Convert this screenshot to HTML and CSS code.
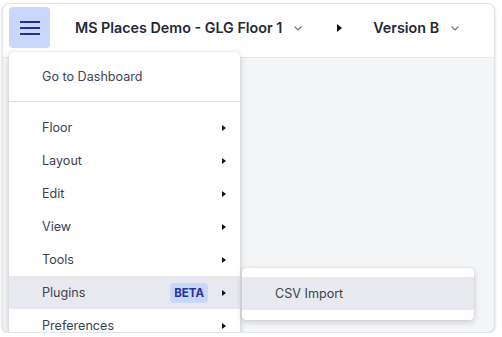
FILE: index.html
```html
<!DOCTYPE html>
<html>
<head>
<meta charset="utf-8">
<link rel="stylesheet" href="styles.css">
</head>
<body>
<div class="card">
  <header class="header">
    <button class="burger" aria-label="Menu">
      <svg width="20" height="14" viewBox="0 0 20 14"><path d="M0 1h20M0 7h20M0 13h20" stroke="#25318f" stroke-width="2"/></svg>
    </button>
    <div class="crumb title">MS Places Demo - GLG Floor 1
      <svg class="chev" width="8" height="5" viewBox="0 0 8 5"><path d="M0.5 0.5L4 4L7.5 0.5" fill="none" stroke="#6b7280" stroke-width="1.1"/></svg>
    </div>
    <svg class="sep" width="5" height="8" viewBox="0 0 5 8"><path d="M0 0L5 4L0 8Z" fill="#111"/></svg>
    <div class="crumb version">Version B
      <svg class="chev" width="8" height="5" viewBox="0 0 8 5"><path d="M0.5 0.5L4 4L7.5 0.5" fill="none" stroke="#6b7280" stroke-width="1.1"/></svg>
    </div>
  </header>
  <main class="canvas"></main>

  <nav class="menu">
    <div class="group">
      <div class="item">Go to Dashboard</div>
    </div>
    <div class="group">
      <div class="item">Floor<span class="arrow"></span></div>
      <div class="item">Layout<span class="arrow"></span></div>
      <div class="item">Edit<span class="arrow"></span></div>
      <div class="item">View<span class="arrow"></span></div>
      <div class="item">Tools<span class="arrow"></span></div>
      <div class="item active">Plugins<span class="badge">BETA</span><span class="arrow"></span></div>
      <div class="item">Preferences<span class="arrow"></span></div>
    </div>
  </nav>

  <nav class="submenu">
    <div class="item active">CSV Import</div>
  </nav>
</div>
</body>
</html>
```

FILE: styles.css
```css
* { box-sizing: border-box; }
html, body { margin: 0; padding: 0; background: #fff; }
body {
  font-family: Inter, "Noto Sans", sans-serif;
  color: #374151;
}
.card {
  position: relative;
  margin: 3px 0 0 2px;
  width: 493px;
  height: 330px;
  border: 1px solid #e2e4e8;
  border-radius: 8px;
  box-shadow: 0 1px 3px rgba(0,0,0,0.18);
  overflow: hidden;
  display: flex;
  flex-direction: column;
  background: #f4f5f7;
}
.header {
  height: 54px;
  flex: none;
  background: #fff;
  border-bottom: 1px solid #e5e7eb;
  display: flex;
  align-items: flex-start;
  padding: 3px 0 0 6px;
}
.burger {
  width: 41px;
  height: 41px;
  border: none;
  border-radius: 4px;
  background: #c9d7fb;
  display: flex;
  align-items: center;
  justify-content: center;
  padding: 0;
}
.crumb {
  font-size: 14.3px;
  font-weight: 600;
  color: #1f2937;
  display: flex;
  align-items: center;
  height: 41px;
}
.title { margin-left: 25px; }
.chev { margin-left: 12px; margin-top: 2px; }
.sep { margin: 17px 0 0 35px; }
.version { margin-left: 31px; }
.canvas { flex: 1; }

.menu {
  position: absolute;
  left: 6px;
  top: 48px;
  width: 231px;
  height: 300px;
  background: #fff;
  border-radius: 4px;
  box-shadow: 0 2px 6px rgba(0,0,0,0.18), 0 0 1px rgba(0,0,0,0.2);
}
.group { padding: 8px 0; }
.group + .group { border-top: 1px solid #dcdee2; padding-top: 9px; }
.item {
  height: 33px;
  display: flex;
  align-items: center;
  padding: 0 14px 0 33px;
  font-size: 12.6px;
  color: #3b4350;
}
.item.active { background: #e8e9ee; }
.arrow {
  margin-left: auto;
  width: 0;
  height: 0;
  border-top: 3.5px solid transparent;
  border-bottom: 3.5px solid transparent;
  border-left: 4px solid #111;
}
.badge + .arrow { margin-left: 14px; }
.badge {
  margin-left: auto;
  background: #c9d7fb;
  color: #2532a0;
  font-size: 11.5px;
  font-weight: 700;
  border-radius: 4px;
  padding: 0 4px;
  height: 20px;
  line-height: 20px;
}
.submenu {
  position: absolute;
  left: 239px;
  top: 264px;
  width: 232px;
  padding: 9px 0 10px;
  background: #fff;
  border-radius: 4px;
  box-shadow: 0 2px 6px rgba(0,0,0,0.18), 0 0 1px rgba(0,0,0,0.2);
}
.submenu .item { padding-left: 33px; }
```
